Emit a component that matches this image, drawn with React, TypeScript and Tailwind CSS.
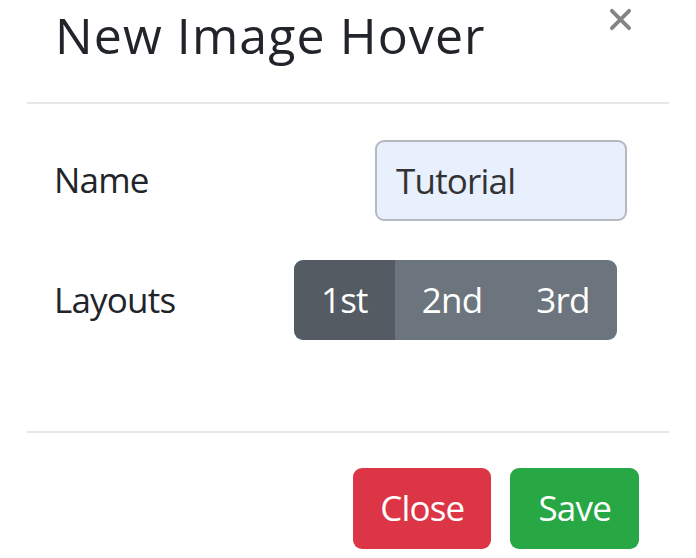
import { useState } from 'react'

const LAYOUTS = ['1st', '2nd', '3rd']

export default function App() {
  const [layout, setLayout] = useState('1st')
  const [name, setName] = useState('Tutorial')

  return (
    <div className="h-[558px] w-[696px] overflow-hidden bg-white px-[27px] font-['Open_Sans',sans-serif] text-[#212529]">
      {/* Header */}
      <div className="relative flex h-[104px] items-start border-b-2 border-[#e5e8eb] pl-[28px]">
        <h5 className="text-[50px] leading-[70px] tracking-[1.1px]">New Image Hover</h5>
        <button className="absolute right-[37px] top-[8px] opacity-60">
          <svg width="23" height="23" viewBox="0 0 24 24">
            <path d="M3 3L21 21M21 3L3 21" stroke="#333" strokeWidth="4" strokeLinecap="round" />
          </svg>
        </button>
      </div>

      {/* Body */}
      <div className="flex h-[327px] flex-col gap-[39px] pl-[27px] pt-[36px]">
        <div className="flex items-center">
          <label className="w-[321px] text-[35px] tracking-[-0.8px]">Name</label>
          <input
            value={name}
            onChange={(e) => setName(e.target.value)}
            className="h-[81px] w-[252px] rounded-[9px] border-2 border-[#b5b9bd] bg-[#e8f0fe] px-[19px] text-[35px] tracking-[-0.8px] text-[#333] outline-none"
          />
        </div>
        <div className="flex items-center">
          <label className="w-[240px] text-[35px] tracking-[-0.8px]">Layouts</label>
          <div className="flex h-[80px] overflow-hidden rounded-[9px]">
            {LAYOUTS.map((l) => (
              <button
                key={l}
                onClick={() => setLayout(l)}
                className={`px-[27px] text-[35px] tracking-[-0.8px] text-white ${
                  layout === l ? 'bg-[#545b62]' : 'bg-[#6c757d]'
                }`}
              >
                {l}
              </button>
            ))}
          </div>
        </div>
      </div>

      {/* Footer */}
      <div className="flex justify-end gap-[19px] border-t-2 border-[#e5e8eb] pr-[30px] pt-[35px]">
        <button className="h-[81px] rounded-[9px] bg-[#dc3545] px-[27px] text-[35px] tracking-[-0.8px] text-white">Close</button>
        <button className="h-[81px] rounded-[9px] bg-[#28a745] px-[28px] text-[35px] tracking-[-0.8px] text-white">Save</button>
      </div>
    </div>
  )
}
